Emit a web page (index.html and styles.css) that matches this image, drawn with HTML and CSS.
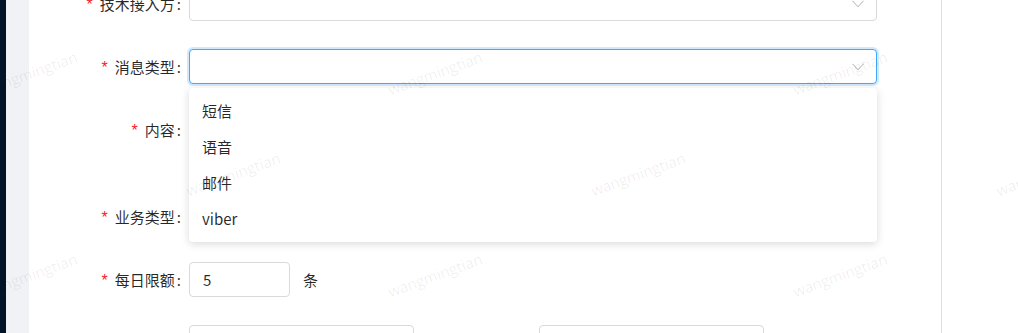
FILE: index.html
```html
<!DOCTYPE html>
<html lang="zh-CN">
<head>
<meta charset="utf-8">
<title>消息配置</title>
<link rel="stylesheet" href="styles.css">
</head>
<body>
<div class="layout">
  <div class="sider"></div>
  <div class="gutter"></div>
  <main class="content">
    <form class="form">
      <div class="row">
        <label class="label"><span class="req">*</span>技术接入方</label>
        <div class="select"><svg class="arrow" viewBox="0 0 12 8"><polyline points="0.5,0.8 6,6.8 11.5,0.8"/></svg></div>
      </div>
      <div class="row">
        <label class="label"><span class="req">*</span>消息类型</label>
        <div class="select focused">
          <svg class="arrow" viewBox="0 0 12 8"><polyline points="0.5,0.8 6,6.8 11.5,0.8"/></svg>
          <ul class="dropdown">
            <li>短信</li>
            <li>语音</li>
            <li>邮件</li>
            <li>viber</li>
          </ul>
        </div>
      </div>
      <div class="row">
        <label class="label"><span class="req">*</span>内容</label>
        <div class="textarea"></div>
      </div>
      <div class="row">
        <label class="label"><span class="req">*</span>业务类型</label>
        <div class="select"><svg class="arrow" viewBox="0 0 12 8"><polyline points="0.5,0.8 6,6.8 11.5,0.8"/></svg></div>
      </div>
      <div class="row">
        <label class="label"><span class="req">*</span>每日限额</label>
        <div class="inline">
          <div class="input small">5</div>
          <span class="unit">条</span>
        </div>
      </div>
      <div class="row">
        <div class="label"></div>
        <div class="pair">
          <div class="input medium"></div>
          <div class="input medium"></div>
        </div>
      </div>
    </form>
  </main>
  <aside class="aside"></aside>
</div>
<div class="watermarks">
  <span class="wm" style="left:30px;top:73px">wangmingtian</span>
  <span class="wm" style="left:30px;top:275px">wangmingtian</span>
  <span class="wm" style="left:233px;top:174px">wangmingtian</span>
  <span class="wm" style="left:435px;top:73px">wangmingtian</span>
  <span class="wm" style="left:435px;top:275px">wangmingtian</span>
  <span class="wm" style="left:638px;top:174px">wangmingtian</span>
  <span class="wm" style="left:840px;top:73px">wangmingtian</span>
  <span class="wm" style="left:840px;top:275px">wangmingtian</span>
  <span class="wm" style="left:1043px;top:174px">wangmingtian</span>
</div>
</body>
</html>
```

FILE: styles.css
```css
* { box-sizing: border-box; }
html, body {
  margin: 0;
  padding: 0;
  height: 100%;
  overflow: hidden;
  background: #fff;
  font-family: "Noto Sans CJK SC", "Noto Sans", sans-serif;
  font-size: 15px;
  color: rgba(0, 0, 0, 0.85);
}
.layout {
  display: flex;
  height: 333px;
}
.sider {
  width: 6px;
  background: #001529;
  flex: none;
}
.gutter {
  width: 23px;
  background: #f0f2f5;
  flex: none;
}
.content {
  width: 913px;
  flex: none;
  background: #fff;
  border-right: 1px solid #dedede;
}
.aside {
  flex: 1;
  background: #fff;
}
.form {
  margin-top: -14px;
}
.row {
  display: grid;
  grid-template-columns: 160px 688px;
  margin-bottom: 28px;
}
.label {
  height: 35px;
  line-height: 35px;
  text-align: right;
  white-space: nowrap;
  padding-right: 8px;
}
.label:not(:empty)::after {
  content: ":";
  margin-left: 2px;
}
.req {
  color: #f5222d;
  font-family: "Liberation Sans", sans-serif;
  font-size: 16px;
  margin-right: 7px;
}
.select {
  position: relative;
  height: 35px;
  border: 1px solid #d9d9d9;
  border-radius: 4px;
  background: #fff;
}
.select.focused {
  border-color: #40a9ff;
  box-shadow: 0 0 0 2px rgba(24, 144, 255, 0.2);
  z-index: 2;
}
.arrow {
  position: absolute;
  right: 12px;
  top: 13px;
  width: 12px;
  height: 8px;
  fill: none;
  stroke: #b0b0b0;
  stroke-width: 1;
}
.dropdown {
  position: absolute;
  left: -1px;
  right: -1px;
  top: calc(100% + 5px);
  margin: 0;
  padding: 5px 0 5px;
  list-style: none;
  background: #fff;
  border-radius: 4px;
  box-shadow: 0 2px 8px rgba(0, 0, 0, 0.15);
}
.dropdown li {
  height: 36px;
  line-height: 36px;
  padding: 0 13px;
  color: rgba(0, 0, 0, 0.85);
}
.textarea {
  height: 59px;
  border: 1px solid #d9d9d9;
  border-radius: 4px;
}
.inline {
  display: flex;
  align-items: center;
}
.input {
  height: 35px;
  line-height: 33px;
  border: 1px solid #d9d9d9;
  border-radius: 4px;
  padding: 0 13px;
  background: #fff;
}
.input.small { width: 101px; }
.input.medium { width: 225px; }
.unit {
  margin-left: 13px;
}
.pair {
  display: flex;
  gap: 125px;
}
.watermarks {
  position: absolute;
  inset: 0;
  pointer-events: none;
  overflow: hidden;
  z-index: 10;
}
.wm {
  position: absolute;
  transform: translate(-50%, -50%) rotate(-20deg);
  font-family: "Open Sans", sans-serif;
  font-size: 15px;
  color: rgba(0, 0, 0, 0.07);
  white-space: nowrap;
}
```
